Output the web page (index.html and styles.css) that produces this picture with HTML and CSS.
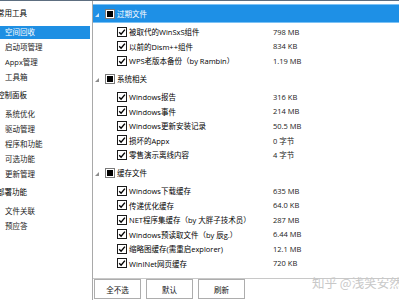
FILE: index.html
```html
<!DOCTYPE html>
<html lang="zh-CN">
<head>
    <meta charset="UTF-8">
    <meta name="viewport" content="width=device-width, initial-scale=1.0">
    <title>空间回收</title>
    <link rel="stylesheet" href="styles.css">
</head>
<body>
    <svg class="defs" width="0" height="0">
        <symbol id="chk" viewBox="0 0 10 10">
            <rect x="0.5" y="0.5" width="9" height="9" fill="#fff" stroke="#1a1a1a"/>
            <path d="M2.2 5.2 L4.1 7.2 L7.9 2.6" fill="none" stroke="#000" stroke-width="1.4"/>
        </symbol>
    </svg>
    <div class="app">
        <div class="sidebar">
            <div class="side-head">常用工具</div>
            <ul class="side-list">
                <li class="active">空间回收</li>
                <li>启动项管理</li>
                <li>Appx管理</li>
                <li>工具箱</li>
            </ul>
            <div class="side-head">控制面板</div>
            <ul class="side-list">
                <li>系统优化</li>
                <li>驱动管理</li>
                <li>程序和功能</li>
                <li>可选功能</li>
                <li>更新管理</li>
            </ul>
            <div class="side-head">部署功能</div>
            <ul class="side-list">
                <li>文件关联</li>
                <li>预应答</li>
            </ul>
        </div>

        <div class="main">
            <div class="tree">
                <div class="group-head selected">
                    <span class="twisty"></span><span class="gbox"></span>过期文件
                </div>
                <div class="items">
                    <div class="item"><span class="name"><svg class="cb"><use href="#chk"/></svg>被取代的WinSxS组件</span><span class="size">798 MB</span></div>
                    <div class="item"><span class="name"><svg class="cb"><use href="#chk"/></svg>以前的Dism++组件</span><span class="size">834 KB</span></div>
                    <div class="item"><span class="name"><svg class="cb"><use href="#chk"/></svg>WPS老版本备份（by Rambin）</span><span class="size">1.19 MB</span></div>
                </div>

                <div class="group-head">
                    <span class="twisty"></span><span class="gbox"></span>系统相关
                </div>
                <div class="items">
                    <div class="item"><span class="name"><svg class="cb"><use href="#chk"/></svg>Windows报告</span><span class="size">316 KB</span></div>
                    <div class="item"><span class="name"><svg class="cb"><use href="#chk"/></svg>Windows事件</span><span class="size">214 MB</span></div>
                    <div class="item"><span class="name"><svg class="cb"><use href="#chk"/></svg>Windows更新安装记录</span><span class="size">50.5 MB</span></div>
                    <div class="item"><span class="name"><svg class="cb"><use href="#chk"/></svg>损坏的Appx</span><span class="size">0 字节</span></div>
                    <div class="item"><span class="name"><svg class="cb"><use href="#chk"/></svg>零售演示离线内容</span><span class="size">4 字节</span></div>
                </div>

                <div class="group-head">
                    <span class="twisty"></span><span class="gbox"></span>缓存文件
                </div>
                <div class="items">
                    <div class="item"><span class="name"><svg class="cb"><use href="#chk"/></svg>Windows下载缓存</span><span class="size">635 MB</span></div>
                    <div class="item"><span class="name"><svg class="cb"><use href="#chk"/></svg>传递优化缓存</span><span class="size">64.0 KB</span></div>
                    <div class="item"><span class="name"><svg class="cb"><use href="#chk"/></svg>NET程序集缓存（by 大胖子技术员）</span><span class="size">287 MB</span></div>
                    <div class="item"><span class="name"><svg class="cb"><use href="#chk"/></svg>Windows预读取文件（by 辰g.）</span><span class="size">6.44 MB</span></div>
                    <div class="item"><span class="name"><svg class="cb"><use href="#chk"/></svg>缩略图缓存(需重启explorer)</span><span class="size">12.1 MB</span></div>
                    <div class="item"><span class="name"><svg class="cb"><use href="#chk"/></svg>WinINet网页缓存</span><span class="size">720 KB</span></div>
                    <div class="item"><span class="name"><svg class="cb"><use href="#chk"/></svg>IE缓存</span><span class="size">0 字节</span></div>
                </div>
            </div>
            <div class="buttons">
                <button>全不选</button>
                <button>默认</button>
                <button>刷新</button>
            </div>
        </div>
        <div class="watermark">知乎 @浅笑安然</div>
    </div>
</body>
</html>
```

FILE: styles.css
```css
* {
    box-sizing: border-box;
}
body {
    margin: 0;
    font-family: "Segoe UI", "Open Sans", "Noto Sans CJK SC", sans-serif;
    font-size: 7.5px;
    color: #000;
    background-color: #fff;
    overflow: hidden;
}
.defs {
    position: absolute;
}
.app {
    display: flex;
    height: 300px;
    border-top: 1px solid #5d6e80;
    position: relative;
}
.sidebar {
    width: 92px;
    flex: none;
    overflow: hidden;
    padding-top: 3px;
}
.side-head {
    height: 18px;
    line-height: 18px;
    margin-left: -3px;
    white-space: nowrap;
    color: #000;
}
.side-list {
    list-style: none;
    margin: 0;
    padding: 4px 0 0;
}
.side-list li {
    height: 13px;
    line-height: 13px;
    margin: 0 2px 2px 0;
    padding-left: 5px;
    white-space: nowrap;
    color: #1a1a1a;
}
.side-list li.active {
    background-color: #1e8fe3;
    color: #fff;
}
.main {
    flex: 1;
    min-width: 0;
    display: flex;
    flex-direction: column;
    border-left: 1px solid #a9a9a9;
}
.tree {
    flex: 1;
    overflow: hidden;
    padding-top: 3px;
}
.group-head {
    height: 19px;
    display: flex;
    align-items: center;
    white-space: nowrap;
}
.group-head.selected {
    background-color: #1e90e6;
    color: #fff;
    box-shadow: inset 0 1px #7cc2f5, inset 0 -1px #7cc2f5;
}
.twisty {
    width: 0;
    height: 0;
    margin: 3px 5px 0 2px;
    border-left: 4px solid transparent;
    border-bottom: 4px solid #8c8c8c;
}
.selected .twisty {
    border-bottom-color: #cfe6f8;
}
.gbox {
    width: 8px;
    height: 8px;
    margin: 0 3px 0 2px;
    background-color: #000;
    border: 1px solid #fff;
    outline: 1px solid #7a7a7a;
}
.items {
    padding: 1.5px 0 1px;
}
.item {
    height: 14.5px;
    display: flex;
    align-items: center;
    padding-left: 24px;
}
.name {
    width: 156px;
    display: flex;
    align-items: center;
    white-space: nowrap;
}
.cb {
    width: 10px;
    height: 10px;
    margin-right: 2px;
    flex: none;
}
.size {
    color: #222;
    white-space: nowrap;
}
.buttons {
    height: 22px;
    flex: none;
    display: flex;
    gap: 5px;
    margin-top: 5px;
    padding: 0 0 0 1px;
    border-top: 1px solid #c8c8c8;
}
.buttons button {
    width: 47px;
    height: 20px;
    padding: 0;
    border: 1px solid #adadad;
    background-color: #fff;
    font: inherit;
    color: #111;
}
.watermark {
    position: absolute;
    left: 312px;
    top: 272px;
    font-family: "Noto Sans CJK SC", sans-serif;
    font-size: 12.5px;
    color: #c8c8c8;
    white-space: nowrap;
}
```
